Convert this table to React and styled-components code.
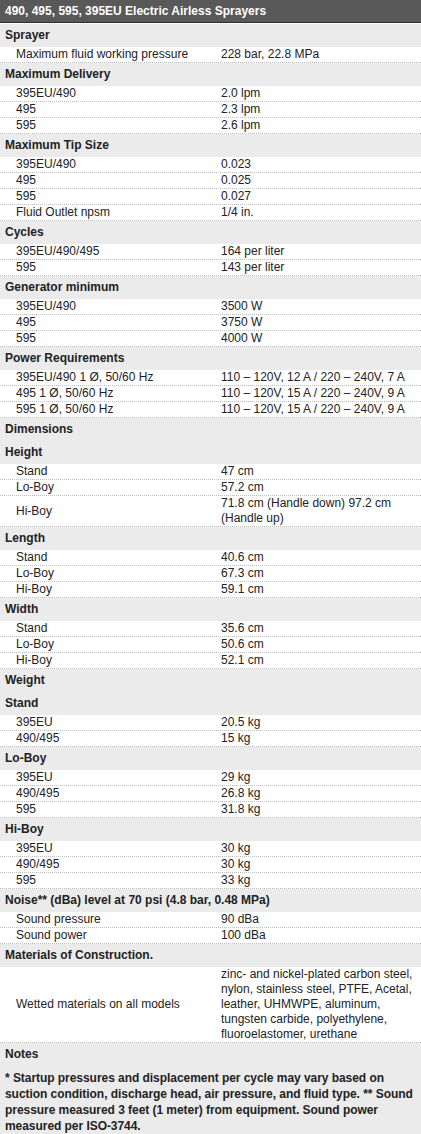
import styled, { createGlobalStyle } from "styled-components";

const GlobalStyle = createGlobalStyle`
  html, body {
    margin: 0;
    padding: 0;
    background: #ffffff;
  }
  body {
    font-family: "Liberation Sans", Arial, sans-serif;
    font-size: 12px;
    color: #222222;
  }
`;

const Sheet = styled.div`
  width: 421px;
  display: flex;
  flex-direction: column;
`;

const TitleBar = styled.h2`
  margin: 0 0 1px;
  height: 22px;
  padding: 0 5px;
  display: flex;
  align-items: center;
  background: #595959;
  border-bottom: 1px solid #2f2f2f;
  color: #ffffff;
  font-size: 12px;
  font-weight: 700;
`;

const GroupHead = styled.div`
  background: #ebebeb;
  padding: 4px 5px;
  line-height: 15px;
  font-weight: 700;
  color: #222222;
`;

const SpecRow = styled.div`
  display: grid;
  grid-template-columns: 221px 1fr;
  align-items: center;
  border-bottom: 1px dotted #bdbdbd;
  line-height: 15px;
`;

const Label = styled.span`
  padding-left: 16px;
`;

const Value = styled.span`
  padding-right: 2px;
`;

const NotesBox = styled.div`
  background: #ebebeb;
  display: flex;
  flex-direction: column;
`;

const NotesText = styled.p`
  margin: 0;
  padding: 4px 0 4px 5px;
  line-height: 16px;
  font-weight: 700;
  letter-spacing: -0.05px;
  color: #222222;
`;

const specs = [
  { head: "Sprayer" },
  ["Maximum fluid working pressure", "228 bar, 22.8 MPa"],
  { head: "Maximum Delivery" },
  ["395EU/490", "2.0 lpm"],
  ["495", "2.3 lpm"],
  ["595", "2.6 lpm"],
  { head: "Maximum Tip Size" },
  ["395EU/490", "0.023"],
  ["495", "0.025"],
  ["595", "0.027"],
  ["Fluid Outlet npsm", "1/4 in."],
  { head: "Cycles" },
  ["395EU/490/495", "164 per liter"],
  ["595", "143 per liter"],
  { head: "Generator minimum" },
  ["395EU/490", "3500 W"],
  ["495", "3750 W"],
  ["595", "4000 W"],
  { head: "Power Requirements" },
  ["395EU/490 1 Ø, 50/60 Hz", "110 – 120V, 12 A / 220 – 240V, 7 A"],
  ["495 1 Ø, 50/60 Hz", "110 – 120V, 15 A / 220 – 240V, 9 A"],
  ["595 1 Ø, 50/60 Hz", "110 – 120V, 15 A / 220 – 240V, 9 A"],
  { head: "Dimensions" },
  { head: "Height" },
  ["Stand", "47 cm"],
  ["Lo-Boy", "57.2 cm"],
  ["Hi-Boy", "71.8 cm (Handle down) 97.2 cm (Handle up)"],
  { head: "Length" },
  ["Stand", "40.6 cm"],
  ["Lo-Boy", "67.3 cm"],
  ["Hi-Boy", "59.1 cm"],
  { head: "Width" },
  ["Stand", "35.6 cm"],
  ["Lo-Boy", "50.6 cm"],
  ["Hi-Boy", "52.1 cm"],
  { head: "Weight" },
  { head: "Stand" },
  ["395EU", "20.5 kg"],
  ["490/495", "15 kg"],
  { head: "Lo-Boy" },
  ["395EU", "29 kg"],
  ["490/495", "26.8 kg"],
  ["595", "31.8 kg"],
  { head: "Hi-Boy" },
  ["395EU", "30 kg"],
  ["490/495", "30 kg"],
  ["595", "33 kg"],
  { head: "Noise** (dBa) level at 70 psi (4.8 bar, 0.48 MPa)" },
  ["Sound pressure", "90 dBa"],
  ["Sound power", "100 dBa"],
  { head: "Materials of Construction." },
  [
    "Wetted materials on all models",
    "zinc- and nickel-plated carbon steel, nylon, stainless steel, PTFE, Acetal, leather, UHMWPE, aluminum, tungsten carbide, polyethylene, fluoroelastomer, urethane",
  ],
];

function App() {
  return (
    <>
      <GlobalStyle />
      <Sheet>
        <TitleBar>490, 495, 595, 395EU Electric Airless Sprayers</TitleBar>
        {specs.map((item, i) =>
          item.head ? (
            <GroupHead key={i}>{item.head}</GroupHead>
          ) : (
            <SpecRow key={i}>
              <Label>{item[0]}</Label>
              <Value>{item[1]}</Value>
            </SpecRow>
          )
        )}
        <NotesBox>
          <GroupHead>Notes</GroupHead>
          <NotesText>
            * Startup pressures and displacement per cycle may vary based on
            suction condition, discharge head, air pressure, and fluid type. **
            Sound pressure measured 3 feet (1 meter) from equipment. Sound
            power measured per ISO-3744.
          </NotesText>
        </NotesBox>
      </Sheet>
    </>
  );
}

export default App;
